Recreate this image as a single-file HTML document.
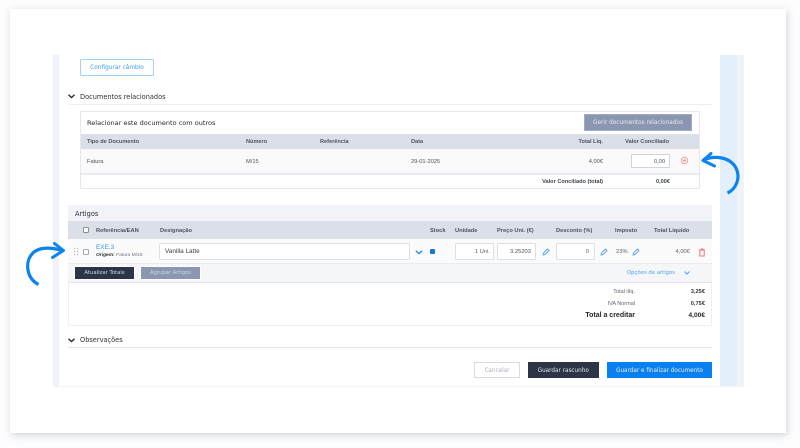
<!DOCTYPE html>
<html lang="pt"><head><meta charset="utf-8"><title>Documento</title>
<style>
html,body{margin:0;padding:0;width:800px;height:448px;overflow:hidden;background:#fdfdfe}
body{font-family:"Liberation Sans",sans-serif;color:#3a3f4b}
#w{position:absolute;left:0;top:0;width:800px;height:448px;filter:blur(.35px)}
.b{position:absolute;box-sizing:border-box}
.t{position:absolute;white-space:nowrap;line-height:10px;font-size:6px}
.p{font-family:"DejaVu Sans",sans-serif}
.h{font-weight:bold;color:#4d5360;font-size:5.6px}
.r{text-align:right}
.c{text-align:center}
.sec{font-family:"DejaVu Sans",sans-serif;font-size:6.6px;color:#2e3139}
.inp{position:absolute;box-sizing:border-box;background:#fff;border:1px solid #dcdfe6;border-radius:1px}
.cb{position:absolute;box-sizing:border-box;width:6px;height:6px;border:1px solid #8b8f99;border-radius:1.5px;background:#fff}
svg{position:absolute;overflow:visible}
</style></head><body><div id="w">
<div class="b" style="left:10px;top:9px;width:776px;height:424px;background:#fff;box-shadow:1px 2px 7px rgba(90,100,130,.28)"></div>

<div class="b" style="left:53px;top:55px;width:6px;height:331px;background:#f1f3fa"></div>
<div class="b" style="left:720px;top:55px;width:17px;height:331px;background:#e3effb"></div>
<div class="b" style="left:737px;top:55px;width:7px;height:331px;background:#f1f3fa"></div>
<div class="b" style="left:53px;top:386px;width:691px;height:1px;background:#f1f3f8"></div>

<div class="b" style="left:80px;top:59px;width:74px;height:17px;border:1px solid #a5d0f8;border-radius:1.5px"></div>
<div class="t c p" style="left:80px;top:62.5px;width:74px;font-size:5.8px;color:#3f9af2">Configurar câmbio</div>

<svg style="left:68px;top:94px" width="7" height="5"><path d="M.5 .8L3.5 3.6L6.500 .8" fill="none" stroke="#22252c" stroke-width="1.400"/></svg>
<div class="t sec" style="left:80px;top:91.500px">Documentos relacionados</div>
<div class="b" style="left:68px;top:104px;width:644px;height:1px;background:#eceef3"></div>

<div class="b" style="left:80px;top:111px;width:620px;height:78px;border:1px solid #e4e7f0;border-radius:2px;background:#fff"></div>
<div class="t sec" style="left:87px;top:117.500px;color:#26292f;font-size:6.550px">Relacionar este documento com outros</div>
<div class="b" style="left:584px;top:114px;width:108px;height:17px;background:#8b97b0;border:1px solid #a3adc2"></div>
<div class="t c p" style="left:584px;top:118px;width:108px;font-size:5.750px;color:#e6e9f0">Gerir documentos relacionados</div>
<div class="b" style="left:81px;top:134px;width:618px;height:15px;background:#dbdfe8"></div>
<div class="t h" style="left:87px;top:136.500px">Tipo de Documento</div>
<div class="t h" style="left:246px;top:136.500px">Número</div>
<div class="t h" style="left:320px;top:136.500px">Referência</div>
<div class="t h" style="left:411px;top:136.500px">Data</div>
<div class="t h r" style="left:540px;top:136.500px;width:63px">Total Liq.</div>
<div class="t h r" style="left:610px;top:136.500px;width:59px">Valor Conciliado</div>
<div class="b" style="left:81px;top:149px;width:618px;height:24px;background:#fafafa"></div>
<div class="b" style="left:81px;top:173px;width:618px;height:2px;background:#e8ebf1"></div>
<div class="t" style="left:87px;top:156.500px;font-size:5.700px;color:#4d525d">Fatura</div>
<div class="t" style="left:246px;top:156.500px;font-size:5.700px;color:#4d525d">M/15</div>
<div class="t" style="left:411px;top:156.500px;font-size:5.700px;color:#4d525d">29-01-2025</div>
<div class="t r" style="left:540px;top:156.500px;width:63px;font-size:5.700px;color:#4d525d">4,00€</div>
<div class="inp" style="left:631px;top:154px;width:39px;height:14px;border-color:#cfd3dc"></div>
<div class="t r" style="left:631px;top:156.500px;width:34px;font-size:5.700px;color:#4d525d">0,00</div>
<svg style="left:680px;top:156px" width="9" height="9"><circle cx="4.500" cy="4.500" r="3.200" fill="none" stroke="#f0a0a4" stroke-width="1"/><circle cx="4.500" cy="4.500" r="1.300" fill="#f09098"/></svg>
<div class="t h r" style="left:500px;top:176.500px;width:103px;color:#3f444f">Valor Conciliado (total)</div>
<div class="t h r" style="left:630px;top:176.500px;width:40px;color:#3f444f">0,00€</div>

<svg style="left:0;top:0" width="800" height="448"><path d="M703 160C715 155 730 157 736 168C741 178 736 189 727.500 193" fill="none" stroke="#0a84ee" stroke-width="3.200" stroke-linecap="butt"/><path d="M711 153.500L703 160.500L714.500 166" fill="none" stroke="#0a84ee" stroke-width="3" stroke-linecap="round" stroke-linejoin="round"/><path d="M63 250.500C50 247 38 247 32 254C25 262 26 278 38.500 284.500" fill="none" stroke="#0a84ee" stroke-width="3.200"/><path d="M54.500 243.500L63.500 250.500L52.500 257.500" fill="none" stroke="#0a84ee" stroke-width="3" stroke-linecap="round" stroke-linejoin="round"/></svg>

<div class="b" style="left:68px;top:205px;width:644px;height:121px;border:1px solid #eceef4;border-radius:2px;background:#fff"></div>
<div class="b" style="left:68px;top:205px;width:644px;height:16px;background:#f1f3f8"></div>
<div class="t sec" style="left:75px;top:208.500px;color:#26292f">Artigos</div>
<div class="b" style="left:68px;top:221px;width:644px;height:18px;background:#dbdfe8"></div>
<div class="cb" style="left:83px;top:227px"></div>
<div class="t h" style="left:96px;top:226px;font-size:5.700px">Referência/EAN</div>
<div class="t h" style="left:160px;top:226px;font-size:5.700px">Designação</div>
<div class="t h" style="left:430px;top:226px;font-size:5.700px">Stock</div>
<div class="t h" style="left:455px;top:226px;font-size:5.700px">Unidade</div>
<div class="t h" style="left:497px;top:226px;font-size:5.700px">Preço Uni. (€)</div>
<div class="t h" style="left:556px;top:226px;font-size:5.700px">Desconto (%)</div>
<div class="t h" style="left:615px;top:226px;font-size:5.700px">Imposto</div>
<div class="t h" style="left:654px;top:226px;font-size:5.700px">Total Líquido</div>

<div class="b" style="left:68px;top:239px;width:644px;height:24px;background:#fbfbfc"></div>
<svg style="left:73px;top:248px" width="6" height="9"><g fill="#b4b9c4"><rect x="1" y="0" width="1.200" height="1.200"/><rect x="4" y="0" width="1.200" height="1.200"/><rect x="1" y="3" width="1.200" height="1.200"/><rect x="4" y="3" width="1.200" height="1.200"/><rect x="1" y="6" width="1.200" height="1.200"/><rect x="4" y="6" width="1.200" height="1.200"/></g></svg>
<div class="cb" style="left:83px;top:249px;border-color:#a2a6b0"></div>
<div class="t" style="left:96px;top:243px;font-size:6.400px;color:#3d93e8">EXE.3</div>
<div class="t" style="left:96px;top:251px;font-size:4.900px;color:#70747e"><b style="color:#333;font-style:italic">Origem:</b> Fatura M/15</div>
<div class="inp" style="left:159px;top:243px;width:251px;height:17px;border-radius:2px"></div>
<div class="t" style="left:165px;top:247px;font-size:6.400px;color:#3a3e48">Vanilla Latte</div>
<svg style="left:415px;top:249.500px" width="8" height="5"><path d="M.8 .8L4 3.600L7.200 .8" fill="none" stroke="#2b8fea" stroke-width="1.400"/></svg>
<div class="b" style="left:430px;top:249px;width:5px;height:5px;background:#1478e0;border-radius:1px"></div>
<div class="inp" style="left:455px;top:243px;width:39px;height:17px"></div>
<div class="t r" style="left:455px;top:247px;width:35px;font-size:5.800px;color:#5a5f6a">1 Uni.</div>
<div class="inp" style="left:497px;top:243px;width:39px;height:17px"></div>
<div class="t r" style="left:497px;top:247px;width:34px;font-size:5.800px;color:#4d525d">3.25203</div>
<div class="inp" style="left:556px;top:243px;width:39px;height:17px"></div>
<div class="t r" style="left:556px;top:247px;width:33px;font-size:5.800px;color:#5a5f6a">0</div>
<svg style="left:542px;top:248px" width="8" height="8"><path d="M1 7L1.500 5L5.500 1L7 2.500L3 6.500Z" fill="none" stroke="#5fa9ec" stroke-width="1"/></svg>
<svg style="left:600px;top:248px" width="8" height="8"><path d="M1 7L1.500 5L5.500 1L7 2.500L3 6.500Z" fill="none" stroke="#5fa9ec" stroke-width="1"/></svg>
<div class="t" style="left:616px;top:247px;font-size:5.800px;color:#5a5f6a">23%</div>
<svg style="left:632px;top:248px" width="8" height="8"><path d="M1 7L1.500 5L5.500 1L7 2.500L3 6.500Z" fill="none" stroke="#5fa9ec" stroke-width="1"/></svg>
<div class="t r" style="left:650px;top:247px;width:40px;font-size:5.800px;color:#5a5f6a">4,00€</div>
<svg style="left:698px;top:247.500px" width="8" height="9"><path d="M1 2H7M3 2V1H5V2M1.800 2V8H6.200V2" fill="none" stroke="#f0787e" stroke-width="1"/></svg>

<div class="b" style="left:68px;top:263px;width:644px;height:20px;background:#f5f6f8;border-top:1px solid #e9ebf0;border-bottom:1px solid #e2e5ed"></div>
<div class="b" style="left:75px;top:267px;width:59px;height:12px;background:#2b3547;box-shadow:0 0 0 1px #fff"></div>
<div class="t c p" style="left:75px;top:268px;width:59px;font-size:5.300px;color:#d5d9e2">Atualizar Totais</div>
<div class="b" style="left:141px;top:267px;width:59px;height:12px;background:#8b97b0;box-shadow:0 0 0 1px #fff"></div>
<div class="t c p" style="left:141px;top:268px;width:59px;font-size:5.200px;color:#d0d6e2">Agrupar Artigos</div>
<div class="t p" style="left:627px;top:268px;font-size:5.300px;color:#4d9fee">Opções de artigos</div>
<svg style="left:684px;top:270.500px" width="6" height="4"><path d="M.5 .5L3 3L5.500 .5" fill="none" stroke="#4d9fee" stroke-width="1"/></svg>

<div class="t r" style="left:570px;top:287px;width:65px;font-size:5.500px;color:#60646e">Total ilíq.</div>
<div class="t r" style="left:670px;top:287px;width:35px;font-size:5.700px;font-weight:bold;color:#33363f">3,25€</div>
<div class="t r" style="left:570px;top:298.500px;width:65px;font-size:5.500px;color:#60646e">IVA Normal</div>
<div class="t r" style="left:670px;top:298.500px;width:35px;font-size:5.700px;font-weight:bold;color:#33363f">0,75€</div>
<div class="t r" style="left:540px;top:310.500px;width:95px;font-size:7px;font-weight:bold;color:#22252c">Total a creditar</div>
<div class="t r" style="left:665px;top:310.500px;width:40px;font-size:6.600px;font-weight:bold;color:#22252c">4,00€</div>

<svg style="left:68px;top:338px" width="7" height="5"><path d="M.5 .8L3.500 3.600L6.500 .8" fill="none" stroke="#22252c" stroke-width="1.400"/></svg>
<div class="t sec" style="left:80px;top:335px">Observações</div>
<div class="b" style="left:68px;top:347px;width:644px;height:1px;background:#e2e5ed"></div>

<div class="b" style="left:474px;top:362px;width:46px;height:16px;border:1px solid #d6dae3;background:#fff"></div>
<div class="t c p" style="left:474px;top:365.500px;width:46px;font-size:5.700px;color:#aab0bc">Cancelar</div>
<div class="b" style="left:527.500px;top:362px;width:71.500px;height:16px;background:#2b3547"></div>
<div class="t c p" style="left:527.500px;top:365.500px;width:71.500px;font-size:5.700px;color:#e4e7ee">Guardar rascunho</div>
<div class="b" style="left:607px;top:362px;width:105px;height:16px;background:#0a7ff0"></div>
<div class="t c p" style="left:607px;top:365.500px;width:105px;font-size:5.700px;color:#eaf3fe">Guardar e finalizar documento</div>
</div></body></html>
